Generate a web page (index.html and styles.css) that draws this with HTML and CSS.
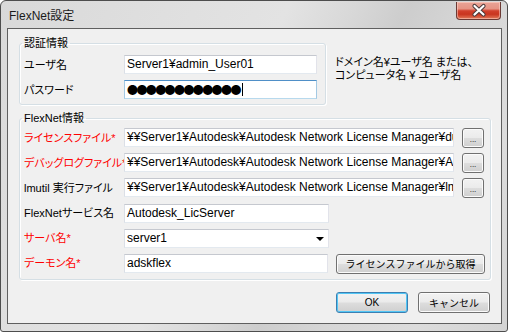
FILE: index.html
```html
<!DOCTYPE html>
<html lang="ja">
  <head>
    <meta charset="utf-8" />
    <title>FlexNet設定</title>
    <link rel="stylesheet" href="styles.css">
  </head>
  <body>
    <div class="window">
      <!-- title bar -->
      <div class="titlebar">
        <span class="title">FlexNet設定</span>
        <div class="close-btn">
          <svg width="45" height="18" viewBox="0 0 45 18">
            <path d="M18.5 5 L27.5 13.5 M27.5 5 L18.5 13.5" stroke="#4a3a3a" stroke-width="4.2" stroke-linecap="round" fill="none" />
            <path d="M18.5 5 L27.5 13.5 M27.5 5 L18.5 13.5" stroke="#ffffff" stroke-width="2.2" stroke-linecap="round" fill="none" />
          </svg>
        </div>
      </div>

      <div class="client">
        <div class="auth-row">
          <fieldset class="group group-auth">
            <legend>認証情報</legend>
            <div class="form-row">
              <span class="label">ユーザ名</span>
              <div class="field field-auth">Server1¥admin_User01</div>
            </div>
            <div class="form-row">
              <span class="label">パスワード</span>
              <div class="field field-auth focused"><span class="dots">●●●●●●●●●●●●</span><span class="caret"></span></div>
            </div>
          </fieldset>
          <p class="hint">ドメイン名¥ユーザ名 または、<br>コンピュータ名 ¥ ユーザ名</p>
        </div>

        <fieldset class="group group-flex">
          <legend>FlexNet情報</legend>
          <div class="form-row">
            <span class="label required">ライセンスファイル*</span>
            <div class="field field-long">¥¥Server1¥Autodesk¥Autodesk Network License Manager¥dummy.lic</div>
            <button class="btn btn-browse">...</button>
          </div>
          <div class="form-row">
            <span class="label required">デバッグログファイル*</span>
            <div class="field field-long">¥¥Server1¥Autodesk¥Autodesk Network License Manager¥Autodesk.log</div>
            <button class="btn btn-browse">...</button>
          </div>
          <div class="form-row">
            <span class="label">lmutil 実行ファイル</span>
            <div class="field field-long">¥¥Server1¥Autodesk¥Autodesk Network License Manager¥lmutil.exe</div>
            <button class="btn btn-browse">...</button>
          </div>
          <div class="form-row">
            <span class="label">FlexNetサービス名</span>
            <div class="field field-short">Autodesk_LicServer</div>
          </div>
          <div class="form-row">
            <span class="label required">サーバ名*</span>
            <div class="field field-short combo">server1<span class="arrow"></span></div>
          </div>
          <div class="form-row">
            <span class="label required">デーモン名*</span>
            <div class="field field-short">adskflex</div>
            <button class="btn btn-fetch">ライセンスファイルから取得</button>
          </div>
        </fieldset>

        <div class="dialog-buttons">
          <button class="btn btn-dialog btn-default">OK</button>
          <button class="btn btn-dialog">キャンセル</button>
        </div>
      </div>
    </div>
  </body>
</html>
```

FILE: styles.css
```css
* {
  box-sizing: border-box;
}

body {
  margin: 0;
  background-color: #ffffff;
  font-family: "Liberation Sans", "Noto Sans CJK JP", sans-serif;
  font-size: 11px;
  line-height: 14px;
  color: #000000;
  font-feature-settings: "palt";
}

.window {
  position: relative;
  width: 508px;
  height: 332px;
  padding: 0 5px 7px 6px;
  border: 1px solid #4d4d4d;
  border-radius: 6px 6px 3px 3px;
  background: linear-gradient(115deg, #d9d9d9 0%, #e0e0e0 30%, #e3e3e3 44%, #d8d8d8 54%, #cdcdcd 62%, #d6d6d6 72%, #dcdcdc 86%, #d3d3d3 100%);
}

/* title bar */
.titlebar {
  height: 27px;
  display: flex;
  align-items: center;
  padding: 2px 0 0 2px;
}

.title {
  font-size: 12px;
  color: #1a1a1a;
}

.close-btn {
  position: absolute;
  top: 1px;
  right: 6px;
  width: 45px;
  height: 18px;
  border: 1px solid #6b3a35;
  border-top: none;
  border-radius: 0 0 4px 4px;
  background: linear-gradient(#e9a396 0%, #e69484 40%, #d2402c 52%, #c9351f 72%, #e27a5a 100%);
  box-shadow: inset 0 0 0 1px rgba(255, 220, 210, 0.5);
}

.close-btn svg {
  position: absolute;
  top: -1px;
  left: -1px;
}

/* client area */
.client {
  height: 296px;
  padding: 7px 10px 0 11px;
  border: 1px solid #5f5f5f;
  background-color: #f0f0f0;
}

.auth-row {
  display: flex;
  align-items: flex-start;
}

.group {
  margin: 0;
  min-width: 0;
  border: 1px solid #d5dfe5;
  border-radius: 3px;
  box-shadow: 1px 1px 0 #ffffff, inset 1px 1px 0 #ffffff;
}

.group legend {
  padding: 0 2px;
  margin-left: -2px;
  line-height: 14px;
}

.group-auth {
  width: 307px;
  padding: 5px 7px 5px 4px;
}

.group-flex {
  width: 472px;
  margin-top: 6px;
  padding: 3px 5px 6px 4px;
}

.group-auth .form-row + .form-row {
  margin-top: 6px;
}

.group-flex .form-row + .form-row {
  margin-top: 6.2px;
}

.form-row {
  display: flex;
  align-items: center;
  height: 19px;
}

.label {
  width: 100px;
  flex-shrink: 0;
  white-space: nowrap;
}

.required {
  color: #ff0000;
}

.hint {
  margin: 20px 0 0 9px;
  line-height: 13px;
  white-space: nowrap;
}

/* text boxes */
.field {
  position: relative;
  height: 19px;
  padding: 0 2px;
  border: 1px solid;
  border-color: #c5c8cf #e2e3ea #e3e9ef #dbdfe6;
  background-color: #ffffff;
  font-size: 12px;
  line-height: 17px;
  white-space: nowrap;
  overflow: hidden;
}

.field-auth {
  width: 193px;
}

.field-long {
  width: 330px;
}

.field-short {
  width: 205px;
}

.focused {
  border-color: #4f8fc7 #a4c9e3 #b7d9ed #a4c9e3;
}

.dots {
  font-family: "Noto Sans CJK JP", sans-serif;
  font-size: 11px;
  letter-spacing: -1.6px;
}

.caret {
  display: inline-block;
  width: 1px;
  height: 13px;
  margin-left: 2px;
  vertical-align: -2px;
  background-color: #000000;
}

.arrow {
  position: absolute;
  right: 4px;
  top: 7px;
  border-left: 4px solid transparent;
  border-right: 4px solid transparent;
  border-top: 4px solid #000000;
}

/* buttons */
.btn {
  font-family: inherit;
  font-size: 10px;
  color: #000000;
  height: 21px;
  padding: 0;
  border: 1px solid #707070;
  border-radius: 3px;
  background: linear-gradient(#f2f2f2 0%, #ebebeb 48%, #dddddd 52%, #cfcfcf 100%);
  box-shadow: inset 0 0 0 1px #fbfbfb;
  flex-shrink: 0;
}

.btn-browse {
  width: 22px;
  height: 20px;
  margin-left: 8px;
  font-size: 8px;
  line-height: 10px;
  padding-top: 5px;
}

.btn-fetch {
  width: 149px;
  height: 20px;
  margin-left: 8px;
  margin-top: 1px;
}

.dialog-buttons {
  display: flex;
  justify-content: flex-end;
  gap: 10px;
  margin-top: 12px;
  padding-right: 1px;
}

.btn-dialog {
  width: 72px;
}

.btn-default {
  border-color: #3c7fb1;
  box-shadow: inset 0 0 0 1px #52c6f5;
}
```
